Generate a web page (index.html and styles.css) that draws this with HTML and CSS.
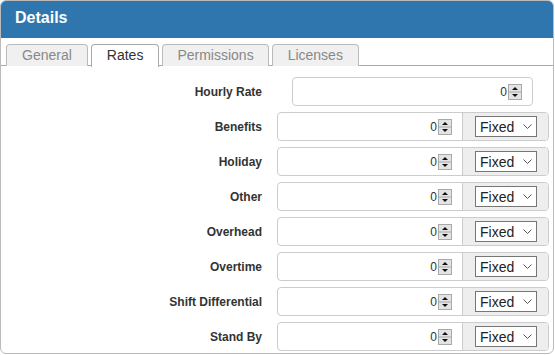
FILE: index.html
```html
<!DOCTYPE html>
<html>
<head>
<meta charset="utf-8">
<link rel="stylesheet" href="styles.css">
</head>
<body>
<div class="panel">
  <div class="header">Details</div>
  <div class="tabs">
    <div class="tab">General</div>
    <div class="tab active">Rates</div>
    <div class="tab wide">Permissions</div>
    <div class="tab">Licenses</div>
  </div>
  <div class="form">
    <div class="row">
      <div class="label">Hourly Rate</div>
      <div class="group single">
        <div class="num"><span class="val">0</span><span class="spin"><svg width="14" height="16" viewBox="0 0 14 16"><rect x="0.5" y="0.5" width="13" height="15" fill="#e3e3e3" stroke="#a9a9a9"/><line x1="1" y1="8" x2="13" y2="8" stroke="#a9a9a9"/><path d="M4 6 L7 3 L10 6 Z" fill="#111"/><path d="M4 10 L10 10 L7 13 Z" fill="#111"/></svg></span></div>
      </div>
    </div>
    <div class="row">
      <div class="label">Benefits</div>
      <div class="group">
        <div class="num"><span class="val">0</span><span class="spin"><svg width="14" height="16" viewBox="0 0 14 16"><rect x="0.5" y="0.5" width="13" height="15" fill="#e3e3e3" stroke="#a9a9a9"/><line x1="1" y1="8" x2="13" y2="8" stroke="#a9a9a9"/><path d="M4 6 L7 3 L10 6 Z" fill="#111"/><path d="M4 10 L10 10 L7 13 Z" fill="#111"/></svg></span></div>
        <div class="addon"><div class="select">Fixed<svg class="chev" width="9" height="6" viewBox="0 0 9 6"><path d="M0.5 0.5 L4.5 4.5 L8.5 0.5" fill="none" stroke="#555" stroke-width="1"/></svg></div></div>
      </div>
    </div>
    <div class="row">
      <div class="label">Holiday</div>
      <div class="group">
        <div class="num"><span class="val">0</span><span class="spin"><svg width="14" height="16" viewBox="0 0 14 16"><rect x="0.5" y="0.5" width="13" height="15" fill="#e3e3e3" stroke="#a9a9a9"/><line x1="1" y1="8" x2="13" y2="8" stroke="#a9a9a9"/><path d="M4 6 L7 3 L10 6 Z" fill="#111"/><path d="M4 10 L10 10 L7 13 Z" fill="#111"/></svg></span></div>
        <div class="addon"><div class="select">Fixed<svg class="chev" width="9" height="6" viewBox="0 0 9 6"><path d="M0.5 0.5 L4.5 4.5 L8.5 0.5" fill="none" stroke="#555" stroke-width="1"/></svg></div></div>
      </div>
    </div>
    <div class="row">
      <div class="label">Other</div>
      <div class="group">
        <div class="num"><span class="val">0</span><span class="spin"><svg width="14" height="16" viewBox="0 0 14 16"><rect x="0.5" y="0.5" width="13" height="15" fill="#e3e3e3" stroke="#a9a9a9"/><line x1="1" y1="8" x2="13" y2="8" stroke="#a9a9a9"/><path d="M4 6 L7 3 L10 6 Z" fill="#111"/><path d="M4 10 L10 10 L7 13 Z" fill="#111"/></svg></span></div>
        <div class="addon"><div class="select">Fixed<svg class="chev" width="9" height="6" viewBox="0 0 9 6"><path d="M0.5 0.5 L4.5 4.5 L8.5 0.5" fill="none" stroke="#555" stroke-width="1"/></svg></div></div>
      </div>
    </div>
    <div class="row">
      <div class="label">Overhead</div>
      <div class="group">
        <div class="num"><span class="val">0</span><span class="spin"><svg width="14" height="16" viewBox="0 0 14 16"><rect x="0.5" y="0.5" width="13" height="15" fill="#e3e3e3" stroke="#a9a9a9"/><line x1="1" y1="8" x2="13" y2="8" stroke="#a9a9a9"/><path d="M4 6 L7 3 L10 6 Z" fill="#111"/><path d="M4 10 L10 10 L7 13 Z" fill="#111"/></svg></span></div>
        <div class="addon"><div class="select">Fixed<svg class="chev" width="9" height="6" viewBox="0 0 9 6"><path d="M0.5 0.5 L4.5 4.5 L8.5 0.5" fill="none" stroke="#555" stroke-width="1"/></svg></div></div>
      </div>
    </div>
    <div class="row">
      <div class="label">Overtime</div>
      <div class="group">
        <div class="num"><span class="val">0</span><span class="spin"><svg width="14" height="16" viewBox="0 0 14 16"><rect x="0.5" y="0.5" width="13" height="15" fill="#e3e3e3" stroke="#a9a9a9"/><line x1="1" y1="8" x2="13" y2="8" stroke="#a9a9a9"/><path d="M4 6 L7 3 L10 6 Z" fill="#111"/><path d="M4 10 L10 10 L7 13 Z" fill="#111"/></svg></span></div>
        <div class="addon"><div class="select">Fixed<svg class="chev" width="9" height="6" viewBox="0 0 9 6"><path d="M0.5 0.5 L4.5 4.5 L8.5 0.5" fill="none" stroke="#555" stroke-width="1"/></svg></div></div>
      </div>
    </div>
    <div class="row">
      <div class="label">Shift Differential</div>
      <div class="group">
        <div class="num"><span class="val">0</span><span class="spin"><svg width="14" height="16" viewBox="0 0 14 16"><rect x="0.5" y="0.5" width="13" height="15" fill="#e3e3e3" stroke="#a9a9a9"/><line x1="1" y1="8" x2="13" y2="8" stroke="#a9a9a9"/><path d="M4 6 L7 3 L10 6 Z" fill="#111"/><path d="M4 10 L10 10 L7 13 Z" fill="#111"/></svg></span></div>
        <div class="addon"><div class="select">Fixed<svg class="chev" width="9" height="6" viewBox="0 0 9 6"><path d="M0.5 0.5 L4.5 4.5 L8.5 0.5" fill="none" stroke="#555" stroke-width="1"/></svg></div></div>
      </div>
    </div>
    <div class="row">
      <div class="label">Stand By</div>
      <div class="group">
        <div class="num"><span class="val">0</span><span class="spin"><svg width="14" height="16" viewBox="0 0 14 16"><rect x="0.5" y="0.5" width="13" height="15" fill="#e3e3e3" stroke="#a9a9a9"/><line x1="1" y1="8" x2="13" y2="8" stroke="#a9a9a9"/><path d="M4 6 L7 3 L10 6 Z" fill="#111"/><path d="M4 10 L10 10 L7 13 Z" fill="#111"/></svg></span></div>
        <div class="addon"><div class="select">Fixed<svg class="chev" width="9" height="6" viewBox="0 0 9 6"><path d="M0.5 0.5 L4.5 4.5 L8.5 0.5" fill="none" stroke="#555" stroke-width="1"/></svg></div></div>
      </div>
    </div>
  </div>
</div>
</body>
</html>
```

FILE: styles.css
```css
* { box-sizing: border-box; }
html, body { margin: 0; padding: 0; background: #fff; }
body { font-family: "Liberation Sans", Arial, sans-serif; color: #333; }

.panel {
  width: 554px;
  height: 354px;
  border: 1px solid #bbb;
  border-radius: 6px;
  overflow: hidden;
  background: #fff;
}

.header {
  height: 38px;
  background: #2e76ad;
  color: #fff;
  font-weight: bold;
  font-size: 16px;
  line-height: 36px;
  padding-left: 15px;
  margin: -1px -1px 0 -1px;
  border-radius: 6px 6px 0 0;
}

.tabs {
  display: flex;
  gap: 3px;
  padding: 6px 0 0 5px;
  border-bottom: 1px solid #aaa;
  height: 28px;
}

.tab {
  height: 22px;
  line-height: 21px;
  font-size: 14px;
  color: #888;
  background: #f0f0f0;
  border: 1px solid #bbb;
  border-bottom: none;
  border-radius: 4px 4px 0 0;
  padding: 0 15px;
}
.tab.wide { padding: 0 14px; }

.tab.active {
  background: #fff;
  color: #333;
  height: 23px;
  border-color: #aaa;
  margin-bottom: -1px;
}

.form {
  display: flex;
  flex-direction: column;
  gap: 6px;
  padding-top: 11px;
}

.row {
  display: flex;
  align-items: center;
  height: 29px;
}

.label {
  width: 261px;
  text-align: right;
  font-size: 12px;
  font-weight: bold;
  color: #333;
  padding-top: 1px;
}

.group {
  display: flex;
  margin-left: 15px;
  width: 272px;
  height: 29px;
  border: 1px solid #ccc;
  border-radius: 4px;
  overflow: hidden;
}
.group.single {
  margin-left: 30px;
  width: 241px;
}

.num {
  flex: 1;
  display: flex;
  align-items: center;
  justify-content: flex-end;
  padding-right: 10px;
  font-size: 12px;
  color: #333;
}
.val { margin-right: 1px; }
.spin { display: flex; }
.spin svg { display: block; }

.addon {
  width: 86px;
  background: #eee;
  border-left: 1px solid #ccc;
  display: flex;
  align-items: center;
  padding-left: 12px;
}

.select {
  width: 62px;
  height: 21px;
  background: #fff;
  border: 1px solid #767676;
  font-size: 14px;
  color: #222;
  display: flex;
  align-items: center;
  padding-left: 4px;
  gap: 9px;
}
.chev { display: block; margin-top: 1px; }
```
